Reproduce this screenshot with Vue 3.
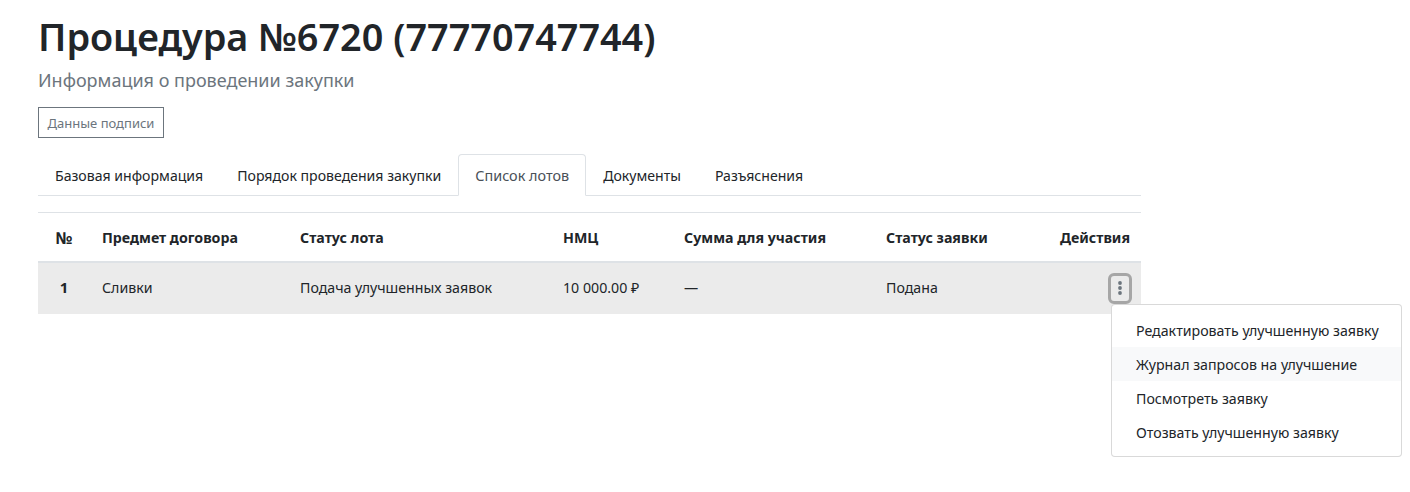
<script setup>
const tabs = [
  { label: 'Базовая информация' },
  { label: 'Порядок проведения закупки' },
  { label: 'Список лотов', active: true },
  { label: 'Документы' },
  { label: 'Разъяснения' }
]
const heads = ['Предмет договора', 'Статус лота', 'НМЦ', 'Сумма для участия', 'Статус заявки']
const cells = ['Сливки', 'Подача улучшенных заявок', '10 000.00 ₽', '—', 'Подана']
const menu = [
  { label: 'Редактировать улучшенную заявку' },
  { label: 'Журнал запросов на улучшение', hover: true },
  { label: 'Посмотреть заявку' },
  { label: 'Отозвать улучшенную заявку' }
]
</script>

<template>
  <main class="page">
    <h1 class="title">Процедура №6720 (77770747744)</h1>
    <p class="subtitle">Информация о проведении закупки</p>
    <button class="sign" type="button">Данные подписи</button>

    <nav class="tabs">
      <a v-for="t in tabs" :key="t.label" class="tab" :class="{ active: t.active }">{{ t.label }}</a>
    </nav>

    <div class="table-wrap">
      <table class="table">
        <colgroup>
          <col style="width:52px" /><col style="width:198px" /><col style="width:263px" />
          <col style="width:121px" /><col style="width:202px" /><col style="width:150px" /><col />
        </colgroup>
        <thead>
          <tr>
            <th class="num big">№</th>
            <th v-for="h in heads" :key="h">{{ h }}</th>
            <th class="act">Действия</th>
          </tr>
        </thead>
        <tbody>
          <tr>
            <td class="num strong">1</td>
            <td v-for="c in cells" :key="c">{{ c }}</td>
            <td class="act">
              <button class="kebab" type="button" aria-label="Действия">
                <svg width="4" height="14" viewBox="0 0 4 14"><circle cx="2" cy="2" r="1.9" /><circle cx="2" cy="7" r="1.9" /><circle cx="2" cy="12" r="1.9" /></svg>
              </button>
            </td>
          </tr>
        </tbody>
      </table>
      <ul class="menu">
        <li v-for="m in menu" :key="m.label" class="item" :class="{ hover: m.hover }">{{ m.label }}</li>
      </ul>
    </div>
  </main>
</template>

<style>
html, body { margin: 0; background: #fff; }
</style>

<style scoped>
.page {
  box-sizing: border-box;
  width: 1141px;
  min-height: 492px;
  padding: 14px 0 0 38px;
  font-family: "Noto Sans", "Open Sans", sans-serif;
  color: #212529;
}
.title {
  margin: 0;
  font-size: 37.8px;
  line-height: 46px;
  font-weight: 600;
}
.subtitle {
  margin: 7px 0 0;
  font-size: 18px;
  line-height: 26px;
  color: #6c757d;
}
.sign {
  display: block;
  box-sizing: border-box;
  width: 126px;
  height: 31px;
  margin-top: 14px;
  padding: 0;
  background: #fff;
  border: 1px solid #6c757d;
  border-radius: 0;
  color: #6c757d;
  font: 13px "Noto Sans", sans-serif;
}
.tabs {
  display: flex;
  height: 41px;
  margin-top: 16px;
  border-bottom: 1px solid #dee2e6;
}
.tab {
  box-sizing: border-box;
  height: 42px;
  padding: 0 16px;
  font-size: 14.1px;
  line-height: 42px;
  color: #212529;
  border: 1px solid transparent;
  border-radius: 4px 4px 0 0;
}
.tab.active {
  color: #495057;
  font-size: 14.4px;
  background: #fff;
  border-color: #dee2e6 #dee2e6 #fff;
}
.table-wrap { position: relative; margin-top: 16px; }
.table {
  width: 100%;
  border-collapse: collapse;
  table-layout: fixed;
  font-size: 14.2px;
  border-top: 1px solid #dee2e6;
}
th {
  box-sizing: border-box;
  height: 49px;
  padding: 2px 12px 0;
  text-align: left;
  font-weight: 700;
  border-bottom: 2px solid #dee2e6;
}
td {
  box-sizing: border-box;
  height: 52px;
  padding: 0 12px 2px;
  background: #ebebeb;
}
th.num, td.num { text-align: center; padding-left: 0; padding-right: 0; }
.big { font-size: 16.5px; }
.strong { font-weight: 700; font-size: 15px; }
th.act, td.act { text-align: right; padding-right: 11px; padding-left: 0; white-space: nowrap; }
td.act { padding-top: 0; padding-bottom: 0; }
.kebab {
  display: inline-flex;
  align-items: center;
  justify-content: center;
  box-sizing: border-box;
  width: 24px;
  height: 31px;
  margin: 0 -2px 0 0;
  padding: 0;
  vertical-align: middle;
  background: transparent;
  border: 3px solid #a6a6a6;
  border-radius: 6px;
}
.kebab svg { fill: #6c757d; display: block; }
.menu {
  position: absolute;
  top: 92px;
  left: 1073px;
  box-sizing: border-box;
  width: 291px;
  height: 153px;
  margin: 0;
  padding: 8px 0;
  list-style: none;
  background: #fff;
  border: 1px solid rgba(0, 0, 0, 0.15);
  border-radius: 4px;
}
.item {
  height: 34px;
  padding: 0 24px;
  font-size: 14.2px;
  line-height: 35px;
  white-space: nowrap;
}
.item.hover { background: #f8f9fa; }
</style>
